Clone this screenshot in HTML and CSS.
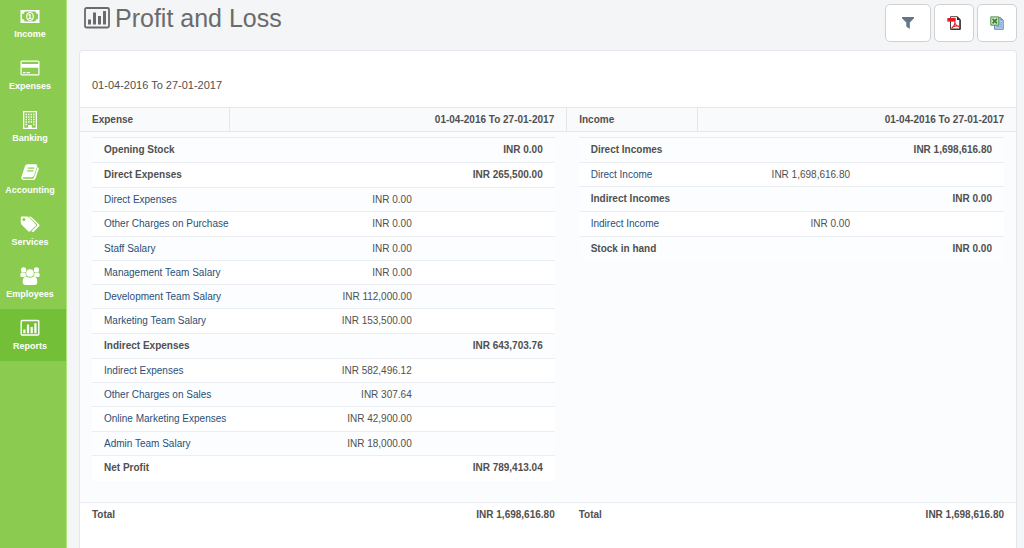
FILE: index.html
```html
<!DOCTYPE html>
<html lang="en">
<head>
<meta charset="utf-8">
<title>Profit and Loss</title>
<link rel="stylesheet" href="styles.css">
</head>
<body>
<div class="app">
  <nav class="sidebar" aria-label="Main">
    <a class="nav-item" href="#"><svg class="nav-icon" viewBox="0 0 20 18"><path fill-rule="evenodd" d="M.5 3h19v13H.5zM4.500 4.500a2.500 2.500 0 0 1-2.500 2.500v5a2.500 2.500 0 0 1 2.500 2.500h11A2.500 2.500 0 0 1 18 12V7a2.500 2.500 0 0 1-2.500-2.500z"/><ellipse cx="10" cy="9.500" rx="3.300" ry="4" fill="none" stroke="#fff" stroke-width="1.200"/><path d="M9.600 6.800 8.200 8l.6.8.6-.4v2.600h-1v1h3.200v-1h-1V6.800z"/></svg><span>Income</span></a>
    <a class="nav-item" href="#"><svg class="nav-icon" viewBox="0 0 20 18"><path fill-rule="evenodd" d="M2 1.500h16A1.500 1.500 0 0 1 19.500 3v12a1.500 1.500 0 0 1-1.500 1.500H2A1.500 1.500 0 0 1 .5 15V3A1.500 1.500 0 0 1 2 1.500zM1.700 2.700v2.300h16.600V2.700zm0 6v6.600h16.600V8.700zM3 13h2.500v1.200H3zm3.500 0H10v1.200H6.500z"/></svg><span>Expenses</span></a>
    <a class="nav-item" href="#"><svg class="nav-icon" viewBox="0 0 20 18"><path fill-rule="evenodd" d="M3 0h14v18H3zM4.300 1.300v15.400h3.900V14h3.600v2.700h3.900V1.300z"/><path fill="none" stroke="#fff" stroke-width="1.400" stroke-dasharray="1.400 1.100" d="M5.600 3.500h9.500M5.600 6h9.500M5.600 8.500h9.500M5.600 11h9.500M5.600 13.500H7M13.100 13.500h1.400"/></svg><span>Banking</span></a>
    <a class="nav-item" href="#"><svg class="nav-icon" viewBox="0 0 20 18"><path fill-rule="evenodd" d="M7.600 1.300h8c1.200 0 1.900.9 1.500 2.100l-3.200 9.400c-.3.900-1 1.400-2 1.400H3.600c-.7 0-1 .3-1 .7 0 .5.500.8 1.200.8h8.600c.8 0 1.300-.3 1.500-1l3.600-10.500c1 .3 1.500 1 1.200 2l-3.100 9c-.4 1.100-1.400 1.800-2.600 1.800H3.600c-1.600 0-2.700-1.500-2.200-2.900L5 3.100c.4-1.100 1.300-1.800 2.600-1.800zM8.100 4.500l-.4 1.200h6.400l.4-1.200zM7.300 7.200l-.4 1.200h6.300l.4-1.200z"/></svg><span>Accounting</span></a>
    <a class="nav-item" href="#"><svg class="nav-icon" viewBox="0 0 20 18"><path fill-rule="evenodd" d="M1.500 1.500h5.300c.8 0 1.600.4 2.200.9l6.500 6.500c.6.600.6 1.400 0 2l-5.300 5.300c-.6.600-1.400.6-2 0L1.700 9.700c-.6-.6-.9-1.300-.9-2.100V2.500c0-.6.3-1 .7-1zM3.900 3a1.500 1.500 0 1 0 0 3 1.500 1.500 0 0 0 0-3z"/><path d="M8.700 1.500h1c.8 0 1.600.4 2.200.9l7.200 6.900c.6.600.6 1.400 0 2l-5.200 5.200c-.7.700-1.500.7-2.100.1l-.3-.4 5.100-5.200c.7-.7.700-1.600 0-2.300z"/></svg><span>Services</span></a>
    <a class="nav-item" href="#"><svg class="nav-icon" viewBox="0 0 20 18"><circle cx="3.600" cy="2.900" r="2.600"/><circle cx="16.400" cy="2.900" r="2.600"/><circle cx="10" cy="6" r="3.800"/><path d="M1.700 5.500C2.500 6 4.700 6 5.400 5.700c0 1.400.4 2.500 1.200 3.400-1 0-1.800.3-2.500.9H2C.8 10 .2 9.300.3 8.200c.1-1.100.5-2.300 1.400-2.700zM18.300 5.500c-.8.500-3 .5-3.700.2 0 1.400-.4 2.500-1.200 3.400 1 0 1.800.3 2.500.9H18c1.200 0 1.800-.7 1.700-1.800-.1-1.100-.5-2.300-1.400-2.700zM6.200 9.500c2 1.500 5.600 1.500 7.600 0 2.600 0 3.500 2.600 3.500 5.500 0 1.900-1 3-2.800 3h-9c-1.800 0-2.800-1.100-2.800-3 0-2.900.9-5.500 3.500-5.500z"/></svg><span>Employees</span></a>
    <a class="nav-item active" href="#" aria-current="page"><svg class="nav-icon" viewBox="0 0 20 18"><rect x="1.200" y="1.500" width="17.600" height="14.500" rx="1" fill="none" stroke="#fff" stroke-width="1.400"/><path d="M3.300 10.500h2.200v3.700H3.300zM6.900 5.500h2.200v8.700H6.900zM10.600 8h2.200v6.200h-2.200zM14.300 4.200h2.200v10h-2.200z"/></svg><span>Reports</span></a>
  </nav>

  <main class="content">
    <header class="page-head">
      <h1 class="page-title"><svg class="title-icon" viewBox="0 0 26 22"><rect x="1" y="1" width="24" height="19.500" rx="1.500" fill="none" stroke="#6b6b6b" stroke-width="1.800"/><path fill="#6b6b6b" d="M4 12.500h3v5H4zM9 5.500h3v12H9zM14 9h3v8.500h-3zM19 4h3v13.500h-3z"/></svg>Profit and Loss</h1>
      <div class="toolbar">
        <button class="tool filter" type="button" aria-label="Filter"><svg class="tool-icon" viewBox="0 0 14 14"><path fill="#63758b" d="M1 1h12v1.200L8.800 6.600V13L5.300 10.400V6.600L1 2.200z"/></svg></button>
        <button class="tool" type="button" aria-label="Export to PDF"><svg class="tool-icon" viewBox="0 0 14 14"><path fill="#fff" stroke="#444" d="M3.500.7h7l2.500 2.600v9.900H3.500z"/><path fill="#222" d="M10 .5 13.500 4H10zM12.500 4h1.200v9.700h-10v-1h8.800z"/><path fill="#e31b23" d="M.3 2h8.400v3.600H.3z"/><path fill="none" stroke="#e5252c" stroke-width="1.100" d="M7.500 5.500c.5 2.500 2 4.200 4.500 5.300M8.200 6.500C7.600 9 6.500 11 4.600 12.500M4.600 11.500c2-1.600 4-2.100 7.400-1.400"/></svg></button>
        <button class="tool" type="button" aria-label="Export to Excel"><svg class="tool-icon" viewBox="0 0 14 14"><path fill="#b4cdee" stroke="#6c8fc3" d="M4.500 1.500h6l2.800 2.800v9H4.500z"/><path fill="#6f96cf" d="M10.300 1.300 13.500 4.500h-3.200zM6 10.500h6v.8H6zM9.800 6.500H12v.8H9.800zM9.800 8.500H12v.8H9.800z"/><path fill="#d3e8c9" stroke="#4f8d43" d="M.8.900h8v8.300h-8z"/><path fill="none" stroke="#3b7e32" stroke-width="1.700" d="m2.600 2.800 4.400 4.500M7 2.800 2.600 7.300"/></svg></button>
      </div>
    </header>

    <section class="card">
      <p class="period">01-04-2016 To 27-01-2017</p>
      <table class="report">
        <colgroup><col class="c-expense"><col class="c-expense-total"><col class="c-income"><col></colgroup>
        <thead>
          <tr><th scope="col">Expense</th><th class="num" scope="col">01-04-2016 To 27-01-2017</th><th scope="col">Income</th><th class="num" scope="col">01-04-2016 To 27-01-2017</th></tr>
        </thead>
        <tbody>
          <tr>
            <td class="ledger-cell" colspan="2">
              <table class="ledger">
                <colgroup><col><col class="c-amount"><col class="c-sum"></colgroup>
                <tr class="group"><td>Opening Stock</td><td></td><td>INR 0.00</td></tr>
                <tr class="group"><td>Direct Expenses</td><td></td><td>INR 265,500.00</td></tr>
                <tr><td><a href="#">Direct Expenses</a></td><td>INR 0.00</td><td></td></tr>
                <tr><td><a href="#">Other Charges on Purchase</a></td><td>INR 0.00</td><td></td></tr>
                <tr><td><a href="#">Staff Salary</a></td><td>INR 0.00</td><td></td></tr>
                <tr><td><a href="#">Management Team Salary</a></td><td>INR 0.00</td><td></td></tr>
                <tr><td><a href="#">Development Team Salary</a></td><td>INR 112,000.00</td><td></td></tr>
                <tr><td><a href="#">Marketing Team Salary</a></td><td>INR 153,500.00</td><td></td></tr>
                <tr class="group"><td>Indirect Expenses</td><td></td><td>INR 643,703.76</td></tr>
                <tr><td><a href="#">Indirect Expenses</a></td><td>INR 582,496.12</td><td></td></tr>
                <tr><td><a href="#">Other Charges on Sales</a></td><td>INR 307.64</td><td></td></tr>
                <tr><td><a href="#">Online Marketing Expenses</a></td><td>INR 42,900.00</td><td></td></tr>
                <tr><td><a href="#">Admin Team Salary</a></td><td>INR 18,000.00</td><td></td></tr>
                <tr class="group"><td>Net Profit</td><td></td><td>INR 789,413.04</td></tr>
              </table>
            </td>
            <td class="ledger-cell" colspan="2">
              <table class="ledger">
                <colgroup><col><col class="c-amount"><col class="c-sum-wide"></colgroup>
                <tr class="group"><td>Direct Incomes</td><td></td><td>INR 1,698,616.80</td></tr>
                <tr><td><a href="#">Direct Income</a></td><td>INR 1,698,616.80</td><td></td></tr>
                <tr class="group"><td>Indirect Incomes</td><td></td><td>INR 0.00</td></tr>
                <tr><td><a href="#">Indirect Income</a></td><td>INR 0.00</td><td></td></tr>
                <tr class="group"><td>Stock in hand</td><td></td><td>INR 0.00</td></tr>
              </table>
            </td>
          </tr>
        </tbody>
        <tfoot>
          <tr><th scope="row">Total</th><td class="num">INR 1,698,616.80</td><th scope="row">Total</th><td class="num">INR 1,698,616.80</td></tr>
        </tfoot>
      </table>
    </section>
  </main>
</div>
</body>
</html>
```
FILE: styles.css
```css
* {
  box-sizing: border-box;
}

body {
  margin: 0;
  font-family: "Liberation Sans", Arial, Helvetica, sans-serif;
  font-size: 10px;
  line-height: 14px;
  color: #505050;
  background: #f3f5f7;
}

a {
  color: #2a4f78;
  text-decoration: none;
}

.app {
  display: flex;
  min-height: 100vh;
}

.sidebar {
  flex: none;
  width: 67px;
  background: #8bcc50;
  border-right: 1px solid #aee57c;
}

.nav-item {
  display: flex;
  flex-direction: column;
  align-items: center;
  gap: 2px;
  height: 52px;
  padding: 10px 6px 0 0;
  font-size: 9px;
  font-weight: bold;
  color: #fff;
}

.nav-item:first-child {
  height: 49px;
  padding-top: 7px;
}

.nav-item.active {
  background: #74bf38;
}

.nav-icon {
  width: 20px;
  height: 18px;
  fill: #fff;
}

.content {
  flex: 1;
  display: flex;
  flex-direction: column;
  min-width: 0;
  padding: 4px 7px 0 12px;
}

.page-head {
  display: flex;
  justify-content: space-between;
  height: 46px;
  padding-left: 5px;
}

.page-title {
  display: flex;
  gap: 5px;
  margin: 0;
  font-size: 25px;
  font-weight: normal;
  line-height: 28px;
  color: #6b6b6b;
}

.title-icon {
  width: 26px;
  height: 22px;
  margin-top: 3px;
}

.toolbar {
  display: flex;
  gap: 3px;
}

.tool {
  display: flex;
  align-items: center;
  justify-content: center;
  width: 40px;
  height: 38px;
  padding: 0;
  background: #fff;
  border: 1px solid #cfd1d3;
  border-radius: 5px;
}

.tool.filter {
  width: 46px;
}

.tool-icon {
  width: 14px;
  height: 14px;
}

.card {
  flex: 1;
  background: #fff;
  border: 1px solid #e3e7ec;
  border-bottom: 0;
  border-radius: 4px 4px 0 0;
}

.period {
  margin: 0;
  padding: 27px 12px 15px;
  font-size: 11px;
}

.report,
.ledger {
  width: 100%;
  table-layout: fixed;
  border-collapse: collapse;
}

.c-expense {
  width: 16%;
}

.c-expense-total {
  width: 36%;
}

.c-income {
  width: 14%;
}

.report > thead th {
  padding: 5px 12px 4px;
  text-align: left;
  background: #f9fafc;
  border: solid #e3e6ea;
  border-width: 1px 0 1px 1px;
}

.report > thead th:first-child {
  border-left: 0;
}

.report > thead .num,
.report > tfoot .num {
  text-align: right;
}

.report > tfoot th,
.report > tfoot td {
  padding: 5px 12px;
  font-weight: bold;
  text-align: left;
  border-top: 1px solid #eaedf1;
}

.ledger-cell {
  padding: 5px 12px 21px;
  vertical-align: top;
  background: #fbfcfe;
}

.c-amount {
  width: 110px;
}

.c-sum {
  width: 131px;
}

.c-sum-wide {
  width: 142px;
}

.ledger td {
  height: 24px;
  padding: 0 12px;
  text-align: right;
  white-space: nowrap;
  border-top: 1px solid #eaedf1;
}

.ledger td:first-child {
  text-align: left;
}

.ledger tr:nth-child(odd) {
  background: #fbfdfe;
}

.ledger tr:nth-child(even) {
  background: #fff;
}

.ledger .group td,
.ledger tr:nth-child(4n) td {
  height: 25px;
}

.ledger .group td {
  font-weight: bold;
}
```
